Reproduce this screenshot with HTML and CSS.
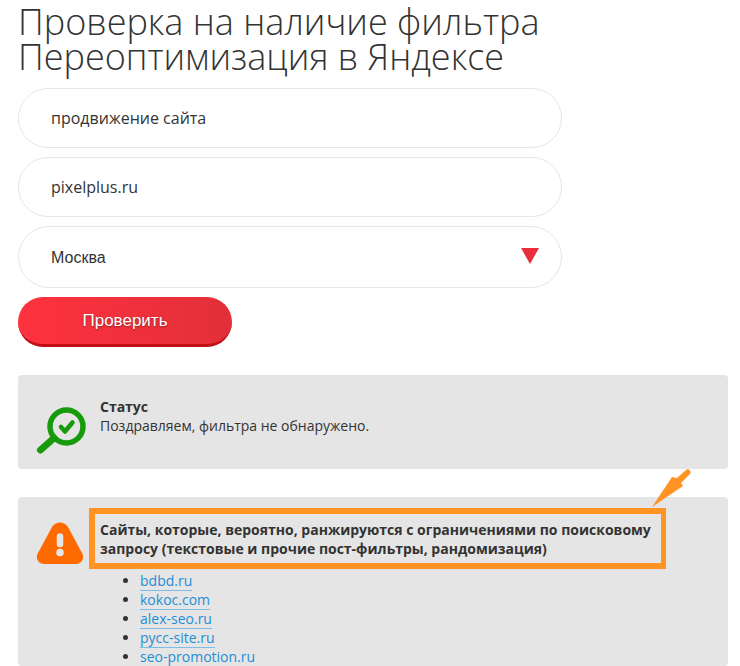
FILE: index.html
```html
<!DOCTYPE html>
<html lang="ru">
<head>
<meta charset="utf-8">
<title>Проверка на наличие фильтра</title>
<link rel="stylesheet" href="styles.css">
</head>
<body>
<main class="page">
  <h1 class="title">Проверка на наличие фильтра<br>Переоптимизация в Яндексе</h1>
  <form class="form">
    <div class="field">продвижение сайта</div>
    <div class="field">pixelplus.ru</div>
    <div class="field field-select">
      <span class="select-value">Москва</span>
      <svg class="caret" width="18" height="16" viewBox="0 0 18 16"><path d="M0 0H18L9 16Z" fill="#e92d3a"/></svg>
    </div>
    <div class="submit">Проверить</div>
  </form>
  <section class="panel panel-status">
    <svg class="icon-search" width="50" height="50" viewBox="0 0 50 50">
      <circle cx="30.500" cy="19.500" r="16.500" fill="none" stroke="#179a0c" stroke-width="5.500"/>
      <path d="M18 31L4.500 43" stroke="#179a0c" stroke-width="7" stroke-linecap="round"/>
      <path d="M25 20L29 24.500L36.500 15.500" fill="none" stroke="#179a0c" stroke-width="4.500" stroke-linecap="round" stroke-linejoin="round"/>
    </svg>
    <div class="status-text">
      <strong>Статус</strong>
      <div>Поздравляем, фильтра не обнаружено.</div>
    </div>
  </section>
  <section class="panel panel-sites">
    <div class="sites-head">
      <svg class="icon-warn" width="48" height="43" viewBox="0 0 48 43">
        <path d="M16 5C19.500 -1 28.500 -1 32 5L46 31C49 36 46 42 40 42H8C2 42 -1 36 2 31Z" fill="#ff6a00"/>
        <path d="M24 14.500V22" stroke="#e5e5e5" stroke-width="6.500" stroke-linecap="round"/>
        <circle cx="24" cy="30.500" r="3.800" fill="#e5e5e5"/>
      </svg>
      <div class="callout">
        <strong>Сайты, которые, вероятно, ранжируются с ограничениями по поисковому запросу (текстовые и прочие пост-фильтры, рандомизация)</strong>
        <svg class="arrow" width="42" height="42" viewBox="0 0 42 42">
          <path d="M0 42L20 12L25 13L34 5C36 3 40 6 38 9L29 18L31 21Z" fill="#ff9425"/>
        </svg>
      </div>
    </div>
    <ul class="sites">
      <li><a href="#">bdbd.ru</a></li>
      <li><a href="#">kokoc.com</a></li>
      <li><a href="#">alex-seo.ru</a></li>
      <li><a href="#">pycc-site.ru</a></li>
      <li><a href="#">seo-promotion.ru</a></li>
    </ul>
  </section>
</main>
</body>
</html>
```
FILE: styles.css
```css
html, body {
  margin: 0;
  padding: 0;
  background: #fff;
}
body {
  height: 666px;
  overflow: hidden;
  font-family: "Open Sans", "Noto Sans", sans-serif;
  color: #333;
}
.page {
  padding: 0 12px 0 18px;
}
.title {
  margin: 0;
  padding-top: 4px;
  font-size: 36px;
  line-height: 35px;
  font-weight: 300;
  color: #333;
}
.form {
  display: flex;
  flex-direction: column;
  gap: 9px;
  margin-top: 14px;
}
.field {
  box-sizing: border-box;
  display: flex;
  align-items: center;
  justify-content: space-between;
  width: 544px;
  height: 60px;
  padding: 0 22px 0 32px;
  border: 1px solid #e6e6e6;
  border-radius: 30px;
  font-size: 16px;
  color: #333;
}
.field-select {
  height: 62px;
  border-radius: 31px;
  font-family: "Liberation Sans", Arial, sans-serif;
}
.select-value {
  padding-top: 2px;
}
.caret {
  margin-bottom: 2px;
}
.submit {
  box-sizing: border-box;
  width: 214px;
  height: 50px;
  line-height: 47px;
  text-align: center;
  border-radius: 25px;
  background: linear-gradient(90deg, #ff323f, #e22f39);
  border-bottom: 3px solid #c10f18;
  color: #fff;
  font-family: "Liberation Sans", Arial, sans-serif;
  font-size: 17px;
  text-shadow: 0 1px 2px rgba(0,0,0,.4);
}
.panel {
  background: #e5e5e5;
  border-radius: 4px;
  font-size: 14px;
  line-height: 19px;
}
.panel-status {
  display: flex;
  align-items: flex-start;
  height: 94px;
  margin-top: 28px;
  box-sizing: border-box;
  padding: 22px 0 0 18px;
}
.icon-search {
  flex: none;
  margin-top: 10px;
}
.status-text {
  margin-left: 14px;
}
.panel-sites {
  margin-top: 28px;
  height: 169px;
  box-sizing: border-box;
  padding: 11px 0 0 18px;
  overflow: visible;
}
.sites-head {
  display: flex;
  align-items: center;
}
.icon-warn {
  flex: none;
  margin-top: 10px;
}
.callout {
  position: relative;
  box-sizing: border-box;
  width: 577px;
  height: 61px;
  margin-left: 5px;
  padding: 6px 0 0 5px;
  border: 6px solid #ff9425;
  border-width: 6px 5px 6px 6px;
}
.arrow {
  position: absolute;
  left: 557px;
  top: -49px;
}
.sites {
  margin: 0;
  padding: 2px 0 0 104px;
}
.sites a {
  color: #1f8dd6;
  text-decoration: none;
  border-bottom: 1px solid #7fbde6;
}
```
